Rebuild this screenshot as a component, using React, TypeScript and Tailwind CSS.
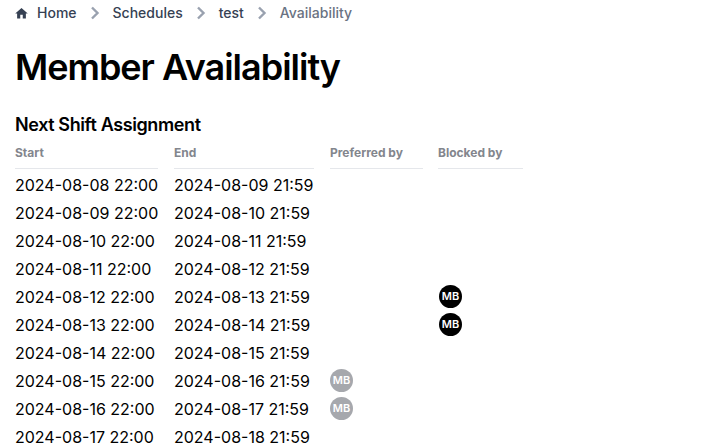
const rows = [
  { start: '2024-08-08 22:00', end: '2024-08-09 21:59' },
  { start: '2024-08-09 22:00', end: '2024-08-10 21:59' },
  { start: '2024-08-10 22:00', end: '2024-08-11 21:59' },
  { start: '2024-08-11 22:00', end: '2024-08-12 21:59' },
  { start: '2024-08-12 22:00', end: '2024-08-13 21:59', blocked: true },
  { start: '2024-08-13 22:00', end: '2024-08-14 21:59', blocked: true },
  { start: '2024-08-14 22:00', end: '2024-08-15 21:59' },
  { start: '2024-08-15 22:00', end: '2024-08-16 21:59', preferred: true },
  { start: '2024-08-16 22:00', end: '2024-08-17 21:59', preferred: true },
  { start: '2024-08-17 22:00', end: '2024-08-18 21:59' },
]

function Chevron() {
  return (
    <svg viewBox="0 0 20 20" fill="none" stroke="currentColor" strokeWidth="2.4" className="w-5 h-5 text-gray-400">
      <path d="M7 4.5 12.5 10 7 15.5" />
    </svg>
  )
}

function Avatar({ muted }: { muted?: boolean }) {
  return (
    <div className={`w-[23px] h-[23px] mb-[2px] rounded-full flex items-center justify-center text-white text-[11px] font-semibold ${muted ? 'bg-[#a6a8ad]' : 'bg-black'}`}>
      MB
    </div>
  )
}

export default function App() {
  return (
    <div className="h-[448px] overflow-hidden bg-white px-[15px] font-['Inter',sans-serif] [font-optical-sizing:none] text-black">
      {/* breadcrumb */}
      <nav className="flex items-center h-[26px] text-sm font-medium text-gray-700">
        <svg viewBox="0 0 24 24" fill="currentColor" className="w-[15px] h-[15px] -ml-px mr-[8px] mt-px">
          <path d="M10 20v-6h4v6h5v-8h3L12 3 2 12h3v8z" />
        </svg>
        <span>Home</span>
        <span className="mx-2"><Chevron /></span>
        <span>Schedules</span>
        <span className="mx-2"><Chevron /></span>
        <span>test</span>
        <span className="mx-2"><Chevron /></span>
        <span className="text-gray-500">Availability</span>
      </nav>

      <h1 className="mt-[16px] text-4xl leading-[50px] font-semibold tracking-[-0.028em]">Member Availability</h1>

      <h2 className="mt-[19px] text-lg leading-7 font-semibold tracking-[-0.022em]">Next Shift Assignment</h2>

      <table className="border-collapse text-left">
        <thead>
          <tr className="text-xs font-bold text-[#83868d]">
            <th className="p-0 pb-[2px] font-bold w-[159px]"><div className="h-[30px] w-[143px] border-b border-gray-200 pt-[4px] leading-[20px]">Start</div></th>
            <th className="p-0 pb-[2px] font-bold w-[156px]"><div className="h-[30px] w-[140px] border-b border-gray-200 pt-[4px] leading-[20px]">End</div></th>
            <th className="p-0 pb-[2px] font-bold w-[108px]"><div className="h-[30px] w-[93px] border-b border-gray-200 pt-[4px] leading-[20px]">Preferred by</div></th>
            <th className="p-0 pb-[2px] font-bold w-[85px]"><div className="h-[30px] w-[85px] border-b border-gray-200 pt-[4px] leading-[20px]">Blocked by</div></th>
          </tr>
        </thead>
        <tbody className="text-base">
          {rows.map((row) => (
            <tr key={row.start} className="h-[28px]">
              <td className="p-0">{row.start}</td>
              <td className="p-0">{row.end}</td>
              <td className="p-0">{row.preferred && <Avatar muted />}</td>
              <td className="p-0">{row.blocked && <div className="pl-px"><Avatar /></div>}</td>
            </tr>
          ))}
        </tbody>
      </table>
    </div>
  )
}
